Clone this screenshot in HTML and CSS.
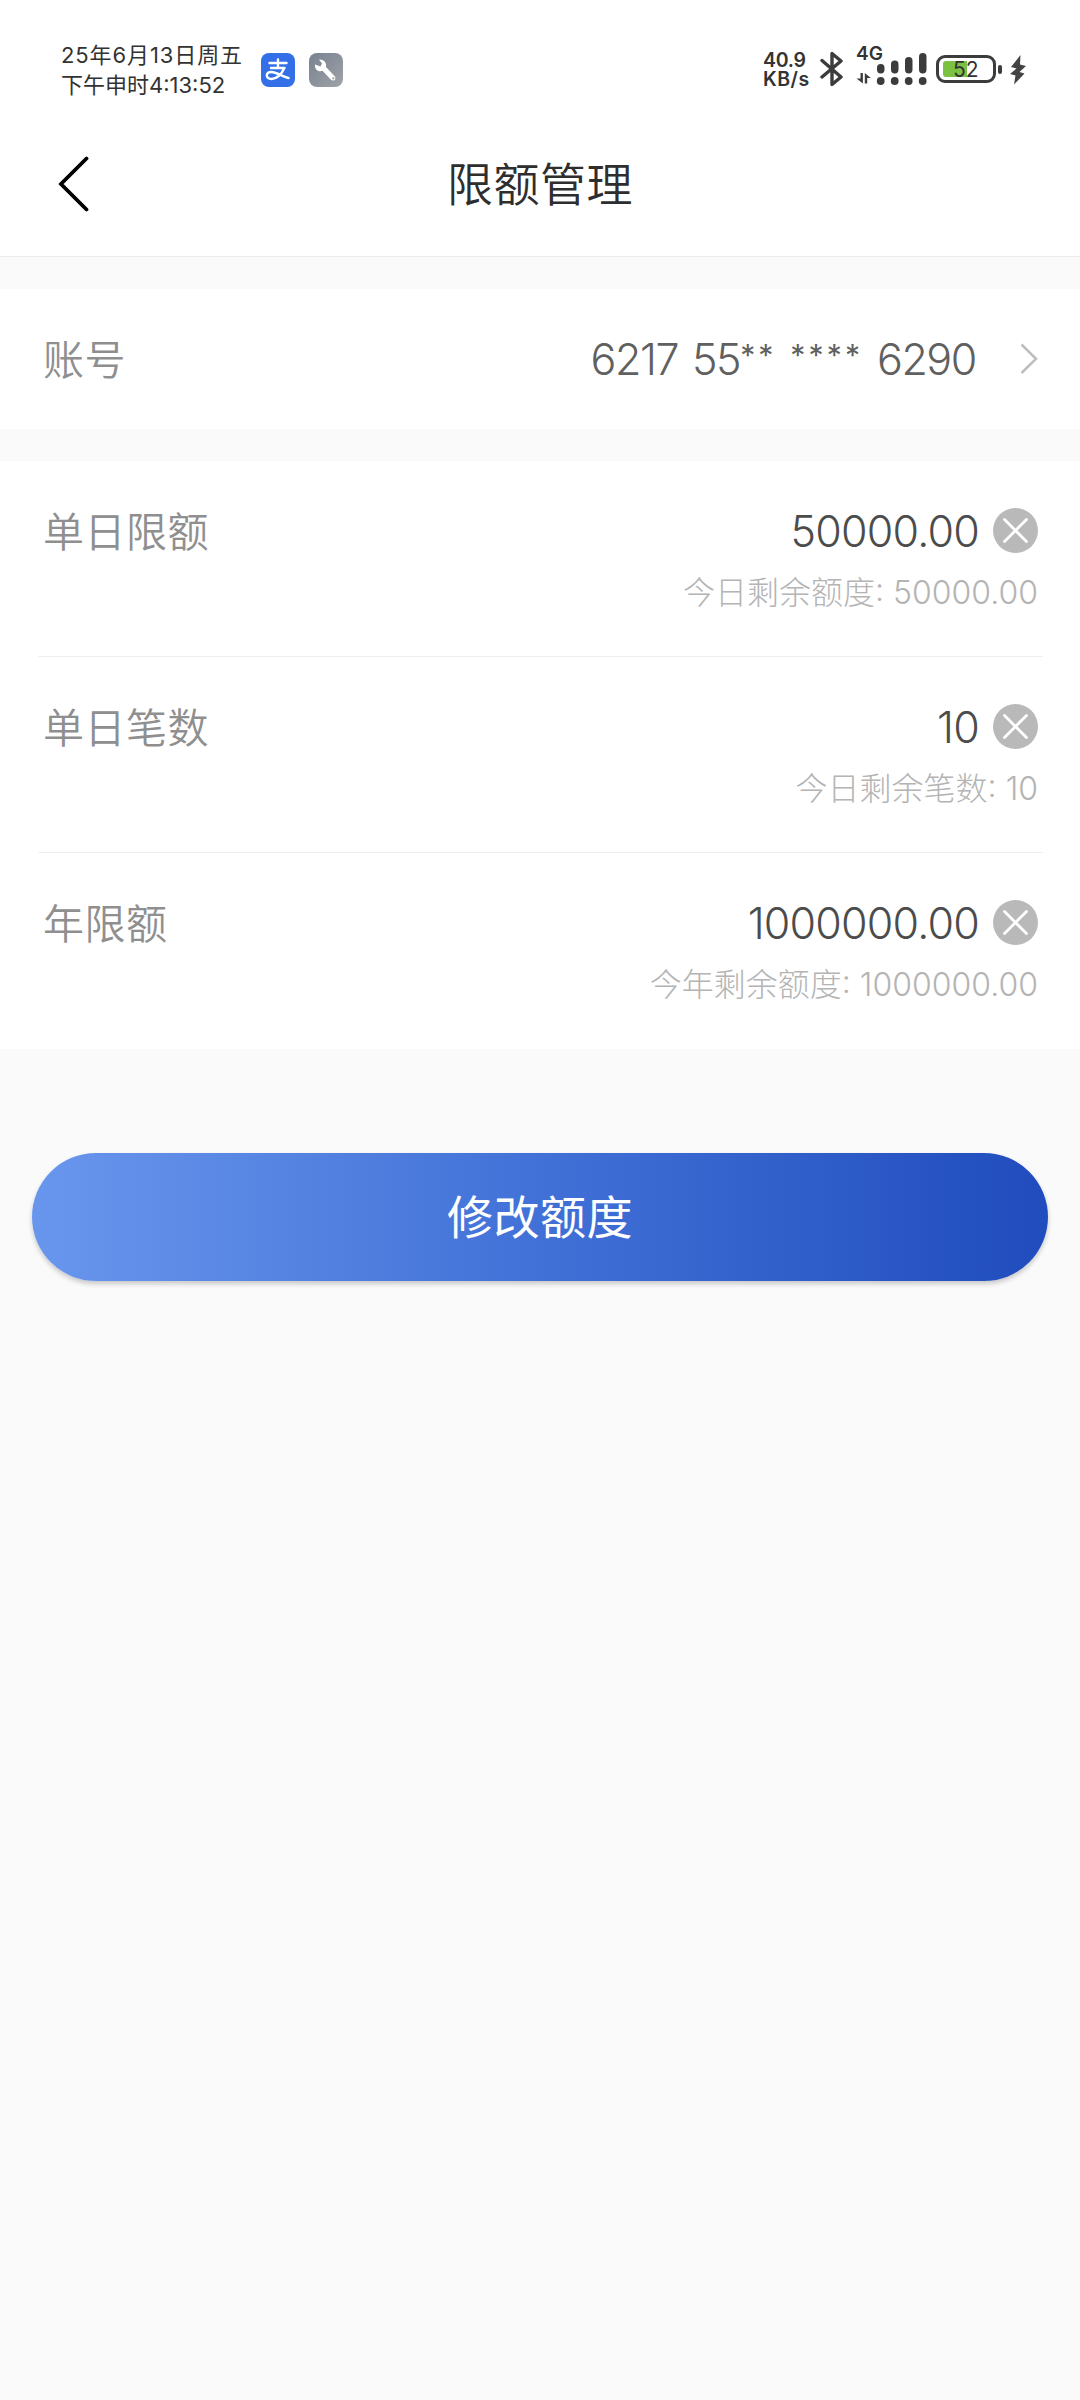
FILE: index.html
```html
<!DOCTYPE html>
<html lang="zh-CN">
<head>
<meta charset="utf-8">
<title>限额管理</title>
<link rel="stylesheet" href="styles.css">
</head>
<body>
<div class="status">
  <div class="clock">
    <div class="date">25年6月13日周五</div>
    <div class="time">下午申时4:13:52</div>
  </div>
  <svg class="app pay" width="34" height="34" viewBox="0 0 34 34">
    <rect width="34" height="34" rx="8" fill="#3370e8"/>
    <g fill="none" stroke="#fff" stroke-width="2.400" stroke-linecap="round">
      <path d="M8.500 10h17M17 6.500v8.500M10 15h13.500"/>
      <path d="M23 15.500c-2.500 6-7.500 10.500-12.500 10.500-6.500 0-6-7 0-7 5 0 10 4.500 17 6"/>
    </g>
  </svg>
  <svg class="app" width="34" height="34" viewBox="0 0 34 34">
    <defs><linearGradient id="steel" x1="0" y1="0" x2="1" y2="1"><stop offset="0" stop-color="#77828f"/><stop offset="1" stop-color="#a0a2a8"/></linearGradient></defs>
    <rect width="34" height="34" rx="8" fill="url(#steel)"/>
    <path d="M10 6.500l3 4 -1.500 3 -5.500-2c-0.500 5 3.500 8 7.500 6.300l8.500 9c3 2.200 5.700-0.500 3.700-3.500l-8.700-9.300c1-5-3-8-7-7.500z" fill="#fff"/>
    <circle cx="24.300" cy="25.300" r="1.100" fill="#999ca3"/>
  </svg>
  <div class="grow"></div>
  <div class="speed"><div class="rate">40.9</div><div class="unit">KB/s</div></div>
  <svg class="bt" width="24" height="38" viewBox="0 0 24 38"><path d="M2 10.500L21 27 12 34.500V3.500L21 11 2 27" fill="none" stroke="#3c3c3c" stroke-width="3.400" stroke-linejoin="round" stroke-linecap="round"/></svg>
  <div class="signal">
    <div class="net">4G</div>
    <svg class="bars" width="72" height="36" viewBox="0 0 72 36" fill="#3c3c3c">
      <path d="M4.500 22h2.400v10.500L0.500 27.500h4zM8.800 32.500v-10.500l6 5h-3.600v5.500z"/>
      <rect x="21" y="13" width="7.500" height="9.500" rx="3.700"/><rect x="35" y="9.500" width="7.500" height="13" rx="3.700"/><rect x="49" y="6" width="7.500" height="16.500" rx="3.700"/><rect x="63" y="2" width="7.500" height="20.500" rx="3.700"/>
      <circle cx="24.700" cy="30" r="3.900"/><circle cx="38.700" cy="30" r="3.900"/><circle cx="52.700" cy="30" r="3.900"/><circle cx="66.700" cy="30" r="3.900"/>
    </svg>
  </div>
  <div class="battery"><div class="level"></div><div class="pct">52</div></div>
  <div class="tip"></div>
  <svg class="bolt" width="18" height="30" viewBox="0 0 18 30"><path d="M11.500 0L2 12l5.500 1.500L1 19l5.500 1.500L5 29.500 15.500 18.500l-5-1.500L17 11l-6-1.500z" fill="#444"/></svg>
</div>
<header class="nav">
  <svg class="back" width="34" height="56" viewBox="0 0 34 56"><path d="M30.500 2.500L5 28 30.500 53.500" fill="none" stroke="#000" stroke-width="3.800" stroke-linecap="round"/></svg>
  <h1 class="title">限额管理</h1>
  <div class="spacer"></div>
</header>
<section class="account">
  <div class="label">账号</div>
  <div class="number">6217 55<span class="mask">**</span> <span class="mask">****</span> 6290</div>
  <svg class="chevron" width="20" height="34" viewBox="0 0 20 34"><path d="M2.500 2.500L17 16.800 2.500 31" fill="none" stroke="#bdbdbd" stroke-width="2.500"/></svg>
</section>
<section class="limits">
  <div class="item">
    <div class="line"><div class="label">单日限额</div><div class="value">50000.00</div>
      <svg class="clear" width="45" height="45" viewBox="0 0 45 45"><circle cx="22.500" cy="22.500" r="22.500" fill="#bab9b9"/><path d="M11.500 11.500l22 22M33.500 11.500l-22 22" stroke="#fff" stroke-width="2.800" stroke-linecap="round"/></svg></div>
    <div class="hint">今日剩余额度: 50000.00</div>
  </div>
  <div class="item">
    <div class="line"><div class="label">单日笔数</div><div class="value">10</div>
      <svg class="clear" width="45" height="45" viewBox="0 0 45 45"><circle cx="22.500" cy="22.500" r="22.500" fill="#bab9b9"/><path d="M11.500 11.500l22 22M33.500 11.500l-22 22" stroke="#fff" stroke-width="2.800" stroke-linecap="round"/></svg></div>
    <div class="hint">今日剩余笔数: 10</div>
  </div>
  <div class="item">
    <div class="line"><div class="label">年限额</div><div class="value">1000000.00</div>
      <svg class="clear" width="45" height="45" viewBox="0 0 45 45"><circle cx="22.500" cy="22.500" r="22.500" fill="#bab9b9"/><path d="M11.500 11.500l22 22M33.500 11.500l-22 22" stroke="#fff" stroke-width="2.800" stroke-linecap="round"/></svg></div>
    <div class="hint">今年剩余额度: 1000000.00</div>
  </div>
</section>
<button class="submit">修改额度</button>
</body>
</html>
```
FILE: styles.css
```css
* { box-sizing: border-box; }
body {
  margin: 0;
  min-height: 2400px;
  background: #fafafa;
  font-family: Inter, "Noto Sans CJK SC", sans-serif;
  font-weight: 300;
  white-space: nowrap;
}
svg { display: block; flex: none; }
.status {
  display: flex;
  align-items: flex-start;
  height: 130px;
  padding: 0 53px 0 61px;
  background: #fff;
  color: #333;
}
.clock {
  width: 200px;
  padding-top: 40px;
  font-size: 22px;
  line-height: 30px;
  font-weight: 400;
}
.date { letter-spacing: 0.9px; }
.time { letter-spacing: 0; }
.app { margin-top: 53px; }
.pay { margin-right: 14px; }
.grow { flex: 1; }
.speed {
  width: 57px;
  padding-top: 51px;
  font-size: 19.5px;
  line-height: 19px;
  font-weight: 600;
}
.rate { letter-spacing: -0.3px; }
.unit { letter-spacing: 0.5px; }
.bt { margin-top: 50px; }
.signal {
  width: 72px;
  height: 66px;
  margin: 40px 8px 0 12px;
}
.net {
  height: 11px;
  font-size: 19px;
  line-height: 28px;
  font-weight: 600;
}
.battery {
  display: flex;
  position: relative;
  width: 60px;
  height: 28px;
  margin-top: 55px;
  padding: 3px 4px;
  border: 3px solid #3c3c3c;
  border-radius: 9px;
}
.level {
  width: 24px;
  height: 16px;
  border-radius: 3px 0 0 3px;
  background: #7bc243;
}
.pct {
  position: absolute;
  left: 14px;
  top: 0;
  font-size: 21px;
  line-height: 24px;
  font-weight: 400;
}
.tip {
  width: 4px;
  height: 9px;
  margin: 65px 7px 0 2px;
  border-radius: 2px;
  background: #3c3c3c;
}
.bolt { margin-top: 55px; }
.nav {
  display: flex;
  align-items: center;
  justify-content: space-between;
  height: 127px;
  padding: 0 56px 18px;
  background: #fff;
  border-bottom: 1px solid #ececec;
}
.spacer { width: 34px; }
.title {
  margin: 0;
  padding-bottom: 6px;
  font-size: 46px;
  font-weight: 350;
  letter-spacing: 0.5px;
  color: #2e2e2e;
}
.account {
  display: flex;
  align-items: center;
  height: 140px;
  margin-top: 32px;
  padding: 0 41px 0 43px;
  background: #fff;
}
.label {
  flex: 1;
  padding-top: 2px;
  font-size: 41px;
  line-height: 60px;
  font-weight: 350;
  letter-spacing: 0.5px;
  color: #8f8f8f;
}
.number {
  font-size: 43px;
  line-height: 60px;
  letter-spacing: -1.4px;
  word-spacing: 3px;
  color: #606060;
}
.mask {
  font-size: 30px;
  line-height: 1;
  letter-spacing: 3.2px;
  vertical-align: 9px;
  font-weight: 400;
}
.chevron { margin-left: 43px; }
.limits {
  margin-top: 32px;
  background: #fff;
}
.item {
  height: 196px;
  margin: 0 37px 0 38px;
  padding: 40px 5px 0;
  border-bottom: 1px solid #efefef;
}
.item:last-child { border-bottom: 0; }
.line {
  display: flex;
  align-items: center;
  height: 60px;
}
.value {
  font-size: 43px;
  letter-spacing: -0.8px;
  color: #4c4c4c;
}
.clear { margin: -1px 0 0 14px; }
.hint {
  margin-top: 2px;
  text-align: right;
  font-size: 32px;
  line-height: 60px;
  color: #b4b4b4;
}
.submit {
  display: block;
  width: 1016px;
  height: 128px;
  margin: 104px auto 0;
  padding: 0 0 6px;
  border: 0;
  border-radius: 64px;
  background: linear-gradient(90deg, #6996ed, #4171d7 50%, #204cbd);
  box-shadow: 0 3px 5px rgba(0, 0, 0, 0.2);
  font-family: inherit;
  font-size: 46px;
  font-weight: 400;
  letter-spacing: 0.5px;
  color: #fff;
}
```
